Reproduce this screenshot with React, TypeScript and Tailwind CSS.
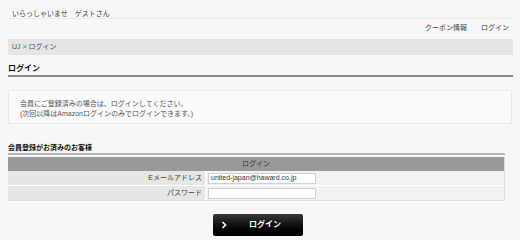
const jp = "font-['Liberation_Sans','Noto_Sans_CJK_JP',sans-serif]"

function Header() {
  return (
    <header className="px-2">
      <div className="flex h-[14px] items-end border-b border-[#ececec] px-1 pb-[1px] text-[7px] leading-none text-[#444]">
        いらっしゃいませ　ゲストさん
      </div>
      <nav className="flex h-[16px] items-center justify-end gap-[14px] pr-[3px] pt-[2px] text-[7px] text-[#444]">
        <a>クーポン情報</a>
        <a>ログイン</a>
      </nav>
    </header>
  )
}

export default function App() {
  return (
    <div className={`${jp} h-[240px] w-[520px] overflow-hidden bg-[#f7f7f7] pt-[5px] text-[#333]`}>
      <Header />

      <div className="mx-2 mt-[4px] mr-[7px] flex h-[16px] items-center bg-[#e5e5e5] px-1 text-[7px] text-[#555]">
        UJ &gt; ログイン
      </div>

      <h2 className="mx-2 mr-[7px] mt-[9px] border-b-2 border-[#8a8a8a] pb-[1px] text-[8px] font-bold leading-[10px] text-[#111]">
        ログイン
      </h2>

      <div className="mx-2 mr-[8px] mt-[13px] h-[34px] border border-[#ebebeb] bg-[#fafafa] px-[11px] pt-[8px] text-[7px] leading-[10px] text-[#555]">
        <p>会員にご登録済みの場合は、ログインしてください。</p>
        <p>(次回以降はAmazonログインのみでログインできます。)</p>
      </div>

      <div className="mx-2 mt-[19px] w-[497px]">
        <h3 className="border-b-2 border-[#b5b5b5] pb-[1px] text-[7px] font-bold leading-[9px] text-[#111]">
          会員登録がお済みのお客様
        </h3>
        <div className="mt-[2px] border-r border-[#dcdcdc]">
          <div className="flex h-[14px] items-center justify-center bg-[#999] text-[7px] text-[#333]">
            ログイン
          </div>
          <div className="flex h-[15px] border-b border-[#fff]">
            <div className="flex w-[198px] items-center justify-end border-r border-white bg-[#e6e6e6] pr-[3px] text-[7px] text-[#444]">
              Eメールアドレス
            </div>
            <div className="flex flex-1 items-center bg-[#f2f2f2] pl-[2px]">
              <div className="flex h-[11px] w-[108px] items-center border border-[#d0d0d0] bg-white px-[2px] text-[7px] text-[#333]">
                united-japan@haward.co.jp
              </div>
            </div>
          </div>
          <div className="flex h-[15px] border-b border-[#dedede]">
            <div className="flex w-[198px] items-center justify-end border-r border-white bg-[#e6e6e6] pr-[3px] text-[7px] text-[#444]">
              パスワード
            </div>
            <div className="flex flex-1 items-center bg-[#f2f2f2] pl-[2px]">
              <div className="h-[11px] w-[108px] border border-[#d0d0d0] bg-white" />
            </div>
          </div>
        </div>

        <div className="mt-[13px] flex justify-center">
          <button className="ml-[3px] flex h-[22px] w-[90px] items-center rounded-[2px] bg-gradient-to-b from-[#3a3a3a] to-[#000] pl-[8px] text-[8px] font-bold text-white">
            <svg width="6" height="8" viewBox="0 0 6 8" className="mr-[22px]">
              <path d="M1.5 1 L4.5 4 L1.5 7" stroke="white" strokeWidth="1.6" fill="none" />
            </svg>
            ログイン
          </button>
        </div>
      </div>
    </div>
  )
}
